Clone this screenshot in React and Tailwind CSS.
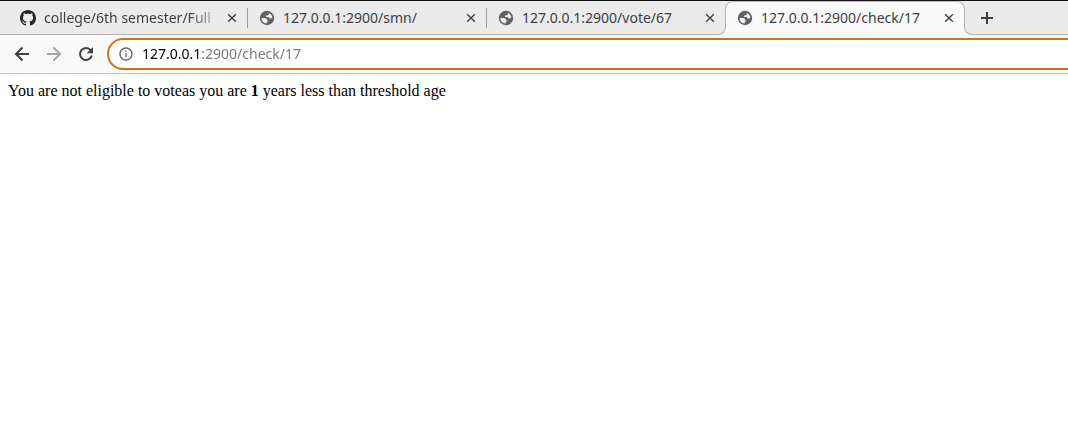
import { MdInfoOutline } from "react-icons/md";

const tabs = [
  { id: 1, title: "college/6th semester/Full", icon: "github", divider: true },
  { id: 2, title: "127.0.0.1:2900/smn/", icon: "globe", divider: true },
  { id: 3, title: "127.0.0.1:2900/vote/67", icon: "globe" },
  { id: 4, title: "127.0.0.1:2900/check/17", icon: "globe", active: true },
];

function GithubIcon() {
  return (
    <svg viewBox="0 0 16 16" className="size-4 shrink-0 fill-[#24292e]" aria-hidden="true">
      <path d="M8 0C3.58 0 0 3.58 0 8c0 3.54 2.29 6.53 5.47 7.59.4.07.55-.17.55-.38 0-.19-.01-.82-.01-1.49-2.01.37-2.53-.49-2.69-.94-.09-.23-.48-.94-.82-1.13-.28-.15-.68-.52-.01-.53.63-.01 1.08.58 1.23.82.72 1.21 1.87.87 2.33.66.07-.52.28-.87.51-1.07-1.78-.2-3.64-.89-3.64-3.95 0-.87.31-1.59.82-2.15-.08-.2-.36-1.02.08-2.12 0 0 .67-.21 2.2.82.64-.18 1.32-.27 2-.27s1.36.09 2 .27c1.53-1.04 2.2-.82 2.2-.82.44 1.1.16 1.92.08 2.12.51.56.82 1.27.82 2.15 0 3.07-1.87 3.75-3.65 3.95.29.25.54.73.54 1.48 0 1.07-.01 1.93-.01 2.2 0 .21.15.46.55.38A8.01 8.01 0 0 0 16 8c0-4.42-3.58-8-8-8z" />
    </svg>
  );
}

function GlobeIcon() {
  return (
    <svg viewBox="0 0 16 16" className="size-4 shrink-0" aria-hidden="true">
      <circle cx="8" cy="8" r="7.2" fill="#5f6368" />
      <path
        d="M2.500 8h3.300c1.400 0 2.200.8 2.200 2v.5h1.300v1.100H7.700v1.800C4.700 13.400 2.400 11 2.500 8zM9.800 3c1.900.7 3.300 2.400 3.500 4.500-.3.6-.8.9-1.500.9h-1.200c-.3-.9-1-1.400-2-1.400H7V5.500h1.400c.8 0 1.400-.5 1.400-1.200z"
        fill="#f1f1f1"
      />
    </svg>
  );
}

function StrokeIcon({ d, size = "size-5" }) {
  return (
    <svg viewBox="0 0 20 20" className={`${size} block fill-none stroke-current stroke-2`} aria-hidden="true">
      <path d={d} />
    </svg>
  );
}

function ReloadIcon() {
  return (
    <svg viewBox="0 0 20 20" className="block size-5" aria-hidden="true">
      <path d="M14.700 6.200A6 6 0 1 0 15.800 11.500" fill="none" stroke="currentColor" strokeWidth="2" />
      <path d="M17 3v6.300h-6.300z" fill="currentColor" />
    </svg>
  );
}

function Tab({ title, icon, active, divider }) {
  return (
    <li
      className={
        active
          ? "relative -mb-px -ml-px flex w-60 min-w-0 items-center rounded-t-lg border border-b-0 border-[#b5b5b5] bg-[#fafafa] pr-2 pb-px pl-[11px]"
          : "flex w-[239px] min-w-0 items-center pt-px pl-[11px]"
      }
    >
      {active && (
        <>
          <span className="absolute bottom-0 -left-2 size-2 bg-[#fafafa]">
            <span className="block size-2 rounded-br-lg border-r border-b border-[#b5b5b5] bg-[#ebebeb]" />
          </span>
          <span className="absolute -right-2 bottom-0 size-2 bg-[#fafafa]">
            <span className="block size-2 rounded-bl-lg border-b border-l border-[#b5b5b5] bg-[#ebebeb]" />
          </span>
        </>
      )}
      <a href="#tab" className="flex min-w-0 flex-1 items-center gap-2 text-sm text-[#3c4043]">
        {icon === "github" ? <GithubIcon /> : <GlobeIcon />}
        <span
          className={
            icon === "github"
              ? "min-w-0 flex-1 overflow-hidden mask-r-from-[80%] whitespace-nowrap"
              : "min-w-0 flex-1 overflow-hidden whitespace-nowrap"
          }
        >
          {title}
        </span>
      </a>
      <button type="button" aria-label="Close tab" className={active ? "text-[#3c4043]" : "mr-2 text-[#3c4043]"}>
        <StrokeIcon d="M4.500 4.500l11 11M15.500 4.500l-11 11" size="size-[14px]" />
      </button>
      {divider && <span className="h-5 w-px bg-[#9a9a9a]" />}
      {!active && !divider && <span className="w-px" />}
    </li>
  );
}

export default function App() {
  return (
    <div className="font-['Noto_Sans',sans-serif]">
      <header className="overflow-hidden">
        <nav className="border-t border-[#111] bg-[#ebebeb]">
          <ul className="flex h-[34px] border-b border-[#b5b5b5] pl-[9px]">
            {tabs.map((tab) => (
              <Tab key={tab.id} {...tab} />
            ))}
            <li className="flex items-center pt-px pl-3">
              <button type="button" aria-label="New tab" className="text-[#3c4043]">
                <StrokeIcon d="M10 4v12M4 10h12" />
              </button>
            </li>
          </ul>
        </nav>
        <div className="flex items-center gap-3 border-b border-[#c4c4c4] bg-[#fafafa] py-[3px] pl-3">
          <button type="button" aria-label="Back" className="text-[#3c4043]">
            <StrokeIcon d="M17 10H4.500M10.500 3.500L4 10l6.500 6.500" />
          </button>
          <button type="button" aria-label="Forward" className="text-[#a5a5a5]">
            <StrokeIcon d="M3 10h12.500M9.500 3.500L16 10l-6.500 6.500" />
          </button>
          <button type="button" aria-label="Reload" className="text-[#3c4043]">
            <ReloadIcon />
          </button>
          <label className="-mr-5 -ml-px flex h-8 flex-1 items-center gap-2 rounded-full border-2 border-[#d67112] bg-white pl-[9px]">
            <MdInfoOutline className="size-4 text-[#5f6368]" />
            <input
              type="text"
              aria-label="Address"
              defaultValue="127.0.0.1:2900/check/17"
              className="min-w-0 flex-1 bg-[linear-gradient(to_right,#000_58px,#767676_58px)] bg-clip-text text-sm text-transparent outline-none"
            />
          </label>
        </div>
      </header>
      <main className="p-2 font-['Liberation_Serif',serif] text-base/[18px] text-black">
        You are not eligible to voteas you are <b>1</b> years less than threshold age
      </main>
    </div>
  );
}
